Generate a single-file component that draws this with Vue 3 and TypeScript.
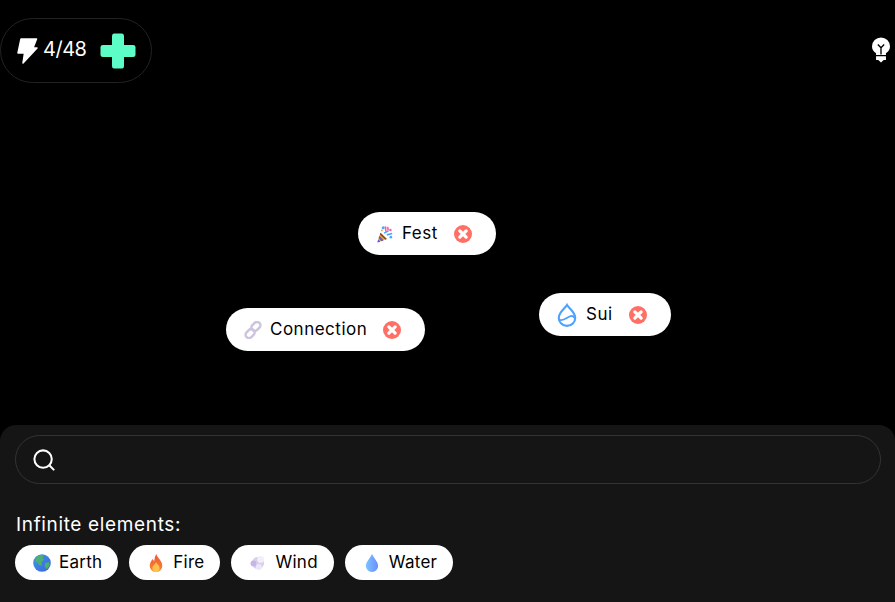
<template>
  <div class="page">
    <header class="topbar">
      <div class="energy">
        <svg class="bolt" viewBox="0 0 21 26"><path d="M4 1H19.500L16 10H20L6 25L7.500 15H1Z" fill="#fff" stroke="#fff" stroke-width="1.500" stroke-linejoin="round" /></svg>
        <span class="energy__count">4/48</span>
        <svg class="plus" viewBox="0 0 36 36"><path d="M14 0.500H22Q24 0.500 24 3V12H33Q35.500 12 35.500 14V22Q35.500 24 33 24H24V33Q24 35.500 22 35.500H14Q12 35.500 12 33V24H3Q0.500 24 0.500 22V14Q0.500 12 3 12H12V3Q12 0.500 14 0.500Z" fill="#5dfdc8" /></svg>
      </div>
      <svg class="bulb" viewBox="0 0 20 28">
        <path d="M10 0A10 10 0 0 1 20 10C20 13.500 18 15.500 15.500 17.500V19.500H4.500V17.500C2 15.500 0 13.500 0 10A10 10 0 0 1 10 0Z" fill="#fff" />
        <path d="M10 19V11.500M6.500 8L10 11.500L13.500 8" stroke="#000" stroke-width="1.500" fill="none" />
        <path d="M4.500 21H15.500V25H13L10 28L7 25H4.500Z" fill="#fff" />
      </svg>
    </header>

    <main class="canvas">
      <div v-for="node in nodes" :key="node.name" class="node" :style="{ left: node.x + 'px', top: node.y + 'px' }">
        <svg v-if="node.large" class="node__icon node__icon--large" viewBox="2 0 16 20" v-html="icons[node.icon]"></svg>
        <svg v-else class="node__icon" viewBox="0 0 20 20" v-html="icons[node.icon]"></svg>
        <span class="node__name">{{ node.name }}</span>
        <svg class="node__close" viewBox="0 0 20 20">
          <circle cx="10" cy="10" r="10" fill="#ff6f66" />
          <path d="M6.500 6.500L13.500 13.500M13.500 6.500L6.500 13.500" stroke="#fff" stroke-width="3.600" stroke-linecap="round" />
        </svg>
      </div>
    </main>

    <section class="panel">
      <div class="search">
        <svg class="search__icon" viewBox="0 0 24 24" fill="none" stroke="#fff" stroke-width="2.200">
          <circle cx="11" cy="11" r="9.500" />
          <path d="M18 18L22.500 22.500" stroke-linecap="round" />
        </svg>
      </div>
      <div class="panel__title">Infinite elements:</div>
      <div class="chips">
        <div v-for="chip in chips" :key="chip.name" class="chip">
          <svg class="chip__icon" viewBox="0 0 20 20" v-html="icons[chip.icon]"></svg>
          <span class="chip__name">{{ chip.name }}</span>
        </div>
      </div>
    </section>
  </div>
</template>

<script setup lang="ts">
const icons: Record<string, string> = {
  fest: `<path d="M1.500 19L5 8.500L12 15.500Z" fill="#f0a63c"/><path d="M3.800 12L8.500 17.200L6 18L3 14.500Z" fill="#5b5bd6"/><path d="M2.500 16L5 18.500L1.500 19.500Z" fill="#5b5bd6"/><path d="M5 8.500L12 15.500L10.500 16.500L4.300 10.500Z" fill="#7a4a2a"/><circle cx="8" cy="3" r="1.700" fill="#4aa8ff"/><circle cx="16" cy="5.500" r="1.400" fill="#ff5fa2"/><path d="M10.500 1.500L11 7.500M13 2L13.500 6" stroke="#ff5fa2" stroke-width="1.800"/><path d="M9 9L14 6.500M12 11L18 9.500" stroke="#4aa8ff" stroke-width="1.800"/><circle cx="16.500" cy="13.500" r="1.500" fill="#4aa8ff"/><circle cx="6.500" cy="6" r="1" fill="#f0a63c"/>`,
  link: `<g fill="none" stroke="#cdc4de" stroke-width="2.800"><rect x="9.500" y="0.500" width="7.500" height="11" rx="3.700" transform="rotate(45 13.200 6)"/><rect x="3" y="8.500" width="7.500" height="11" rx="3.700" transform="rotate(45 6.800 14)"/></g>`,
  sui: `<path d="M10 2.400C11.500 5 16.600 8.400 16.600 12.500A6.600 6.600 0 0 1 3.400 12.500C3.400 8.400 8.500 5 10 2.400Z" fill="none" stroke="#4da2ff" stroke-width="1.700"/><path d="M4 14.200C7.500 15.600 10 12 13 11.300C14.500 11 15.500 11.800 16 12.800" fill="none" stroke="#4da2ff" stroke-width="1.500"/>`,
  earth: `<defs><linearGradient id="globe" x1="0" y1="0" x2="1" y2="1"><stop offset="0" stop-color="#38a0d8"/><stop offset="1" stop-color="#3f5ee8"/></linearGradient></defs><circle cx="10" cy="10" r="9.800" fill="url(#globe)"/><path d="M4 3.500C6 1.500 9 .5 12 1L10.500 4L12 6.500L9 9.500L10 12.500L8 13L4.500 9.500L2 7.500Z" fill="#4fae72"/><path d="M13.500 10L18 9L18.500 13L15 17L13 13.500Z" fill="#4fae72"/>`,
  fire: `<defs><linearGradient id="flame" x1="0" y1="0" x2="0" y2="1"><stop offset="0" stop-color="#f0533a"/><stop offset="1" stop-color="#f98a2c"/></linearGradient></defs><path d="M10.500 0C11 4.500 17 7 17 13A7 7 0 0 1 3 13C3 9.500 5 8 6 5.500C7 6.500 7.500 7.500 8 8C8.500 5.500 8.500 2.500 10.500 0Z" fill="url(#flame)"/><path d="M10 9C11 11.500 14 12.500 14 16A4 4 0 0 1 6 16C6 13 9 12 10 9Z" fill="#ffc04d"/>`,
  wind: `<circle cx="10" cy="10" r="6.800" fill="#d8cfee"/><circle cx="13" cy="6" r="3.800" fill="#f3effa"/><circle cx="5" cy="10.500" r="3.300" fill="#c5b6e6"/><circle cx="11" cy="14.500" r="3.300" fill="#ece7f6"/>`,
  water: `<defs><linearGradient id="drop" x1="0" y1="0" x2="1" y2="0"><stop offset="0" stop-color="#7cc4ff"/><stop offset="1" stop-color="#6a8dff"/></linearGradient></defs><path d="M10 0C11.500 4 16.800 8.500 16.800 13.200A6.800 6.800 0 0 1 3.200 13.200C3.200 8.500 8.500 4 10 0Z" fill="url(#drop)"/>`
}

const nodes = [
  { name: 'Fest', icon: 'fest', x: 358, y: 212, large: false },
  { name: 'Connection', icon: 'link', x: 226, y: 308, large: false },
  { name: 'Sui', icon: 'sui', x: 539, y: 293, large: true }
]

const chips = [
  { name: 'Earth', icon: 'earth' },
  { name: 'Fire', icon: 'fire' },
  { name: 'Wind', icon: 'wind' },
  { name: 'Water', icon: 'water' }
]
</script>

<style scoped>
.page {
  width: 895px;
  height: 602px;
  display: flex;
  flex-direction: column;
  background: #000;
  color: #fff;
  font-family: Inter, "Liberation Sans", sans-serif;
  overflow: hidden;
  position: relative;
}

.topbar {
  display: flex;
  justify-content: space-between;
  align-items: center;
  padding: 18px 5px 0 0;
}

.energy {
  width: 152px;
  height: 65px;
  box-sizing: border-box;
  display: flex;
  align-items: center;
  padding-left: 16px;
  border: 1px solid #222;
  border-radius: 33px;
}

.bolt {
  width: 21px;
  height: 26px;
}

.energy__count {
  margin: 0 0 3px 5px;
  font-size: 20px;
  letter-spacing: -0.5px;
}

.plus {
  width: 36px;
  height: 36px;
  margin-left: 14px;
}

.bulb {
  width: 18px;
  height: 26px;
  margin-bottom: 1px;
}

.canvas {
  flex: 1;
}

.node {
  position: absolute;
  height: 43px;
  box-sizing: border-box;
  display: flex;
  align-items: center;
  padding: 0 24px 0 18px;
  border-radius: 22px;
  background: #fff;
  color: #000;
  font-size: 17px;
  letter-spacing: 0.5px;
}

.node__icon {
  flex: none;
  width: 18px;
  height: 18px;
  margin-right: 8px;
}

.node__icon--large {
  width: 20px;
  height: 25px;
  margin-right: 9px;
}

.node__name {
  margin: 0 16px 2px 0;
}

.node__close {
  flex: none;
  width: 18px;
  height: 18px;
}

.panel {
  height: 177px;
  box-sizing: border-box;
  padding: 10px 14px 0 15px;
  border-radius: 16px 16px 0 0;
  background: #151515;
}

.search {
  height: 49px;
  box-sizing: border-box;
  display: flex;
  align-items: center;
  padding-left: 17px;
  border: 1px solid #333;
  border-radius: 25px;
}

.search__icon {
  width: 22px;
  height: 22px;
}

.panel__title {
  margin: 30px 0 9px 1px;
  font-size: 19px;
  line-height: 22px;
  letter-spacing: 0.65px;
}

.chips {
  display: flex;
  gap: 11px;
}

.chip {
  height: 35px;
  box-sizing: border-box;
  display: flex;
  align-items: center;
  gap: 8px;
  padding: 0 16px 0 18px;
  border-radius: 18px;
  background: #fff;
  color: #000;
  font-size: 17px;
  letter-spacing: 0.25px;
}

.chip__icon {
  flex: none;
  width: 18px;
  height: 18px;
}

.chip__name {
  margin-bottom: 1px;
}
</style>
